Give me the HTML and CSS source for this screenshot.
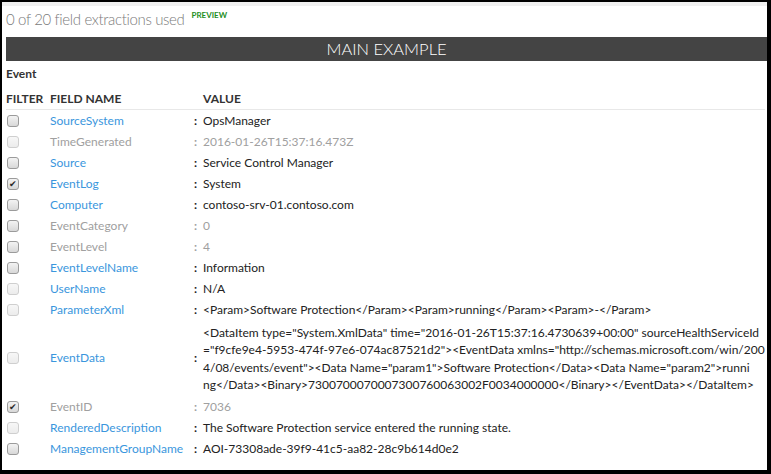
FILE: index.html
```html
<!DOCTYPE html>
<html>
<head>
<meta charset="utf-8">
<link rel="stylesheet" href="styles.css">
</head>
<body>
<div class="frame">
  <div class="topstrip"></div>
  <div class="content">
    <div class="usage"><span class="used">0 of 20 field extractions used</span><span class="preview">PREVIEW</span></div>
    <div class="banner">MAIN EXAMPLE</div>
    <div class="section">Event</div>
    <div class="grid">
      <div class="hd">FILTER</div><div class="hd">FIELD NAME</div><div class="hd"></div><div class="hd">VALUE</div>
      <div class="sep"></div>

      <div class="c"><span class="cb"></span></div><div class="n">SourceSystem</div><div class="k">:</div><div class="v">OpsManager</div>
      <div class="c"><span class="cb off"></span></div><div class="n dim">TimeGenerated</div><div class="k dim">:</div><div class="v dim">2016-01-26T15:37:16.473Z</div>
      <div class="c"><span class="cb"></span></div><div class="n">Source</div><div class="k">:</div><div class="v">Service Control Manager</div>
      <div class="c"><span class="cb on">&#10004;</span></div><div class="n">EventLog</div><div class="k">:</div><div class="v">System</div>
      <div class="c"><span class="cb"></span></div><div class="n">Computer</div><div class="k">:</div><div class="v">contoso-srv-01.contoso.com</div>
      <div class="c"><span class="cb"></span></div><div class="n dim">EventCategory</div><div class="k dim">:</div><div class="v dim">0</div>
      <div class="c"><span class="cb"></span></div><div class="n dim">EventLevel</div><div class="k dim">:</div><div class="v dim">4</div>
      <div class="c"><span class="cb"></span></div><div class="n">EventLevelName</div><div class="k">:</div><div class="v">Information</div>
      <div class="c"><span class="cb off"></span></div><div class="n">UserName</div><div class="k">:</div><div class="v">N/A</div>
      <div class="c"><span class="cb off"></span></div><div class="n">ParameterXml</div><div class="k">:</div><div class="v">&lt;Param&gt;Software Protection&lt;/Param&gt;&lt;Param&gt;running&lt;/Param&gt;&lt;Param&gt;-&lt;/Param&gt;</div>
      <div class="c tall"><span class="cb off"></span></div><div class="n tall">EventData</div><div class="k tall">:</div><div class="v long">&lt;DataItem type="System.XmlData" time="2016-01-26T15:37:16.4730639+00:00" sourceHealthServiceId<br>="f9cfe9e4-5953-474f-97e6-074ac87521d2"&gt;&lt;EventData xmlns="http://schemas.microsoft.com/win/200<br>4/08/events/event"&gt;&lt;Data Name="param1"&gt;Software Protection&lt;/Data&gt;&lt;Data Name="param2"&gt;runni<br>ng&lt;/Data&gt;&lt;Binary&gt;7300700070007300760063002F0034000000&lt;/Binary&gt;&lt;/EventData&gt;&lt;/DataItem&gt;</div>
      <div class="c"><span class="cb on">&#10004;</span></div><div class="n dim">EventID</div><div class="k dim">:</div><div class="v dim">7036</div>
      <div class="c"><span class="cb off"></span></div><div class="n">RenderedDescription</div><div class="k">:</div><div class="v">The Software Protection service entered the running state.</div>
      <div class="c"><span class="cb"></span></div><div class="n">ManagementGroupName</div><div class="k">:</div><div class="v">AOI-73308ade-39f9-41c5-aa82-28c9b614d0e2</div>
    </div>
  </div>
</div>
</body>
</html>
```

FILE: styles.css
```css
* { box-sizing: border-box; }
html, body { margin: 0; padding: 0; background: #000; }
body { font-family: Lato, "Open Sans", "Liberation Sans", sans-serif; }
.frame {
  width: 771px;
  height: 474px;
  background: #fff;
  border-style: solid;
  border-color: #000;
  border-width: 2px 4px 4px 2px;
  overflow: hidden;
}
.topstrip { height: 4px; background: #f0f0f0; }
.content { padding: 0 0 0 4px; }
.usage { height: 31px; display: flex; align-items: flex-start; padding-top: 2px; }
.used { font-size: 15px; font-weight: 300; color: #7b7b7b; line-height: 22px; letter-spacing: -0.35px; }
.preview { font-size: 8px; font-weight: 700; color: #1f8f1f; margin-left: 7px; line-height: 14px; }
.banner {
  background: #444;
  color: #fff;
  height: 24px;
  line-height: 24px;
  text-align: center;
  font-size: 16.5px;
  font-weight: 300;
  width: 761px;
}
.section { font-size: 12px; font-weight: 700; color: #333; height: 27px; line-height: 24px; padding-top: 1px; }
.grid {
  display: grid;
  grid-template-columns: 44px 143px 10px 1fr;
  font-size: 12px;
  color: #222;
  margin-right: 6px;
}
.hd { font-weight: 700; color: #333; line-height: 21px; padding-top: 0; height: 21px; }
.sep { grid-column: 1 / -1; height: 1px; background: #e8e8e8; }
.c, .n, .k, .v { line-height: 21px; height: 21px; white-space: nowrap; }
.c { display: flex; align-items: center; padding-left: 1px; }
.n { color: #3a96dd; }
.k { text-align: left; padding-left: 1px; font-weight: 700; }
.dim { color: #a0a0a0; }
.cb {
  width: 12px; height: 12px;
  border: 1px solid #9b9b9b;
  border-radius: 3px;
  background: linear-gradient(#f3f3f3, #d8d8d8);
  display: inline-flex; align-items: center; justify-content: center;
  font-size: 9px; color: #333; line-height: 1;
}
.cb.off { border-color: #cfcfcf; background: linear-gradient(#f7f7f7, #ececec); }
.cb.on { color: #2a2a2a; }
.tall { height: 76px; line-height: 76px; }
.c.tall { line-height: normal; }
.v.long { height: 76px; line-height: 17.4px; white-space: nowrap; padding-top: 4px; }
```
